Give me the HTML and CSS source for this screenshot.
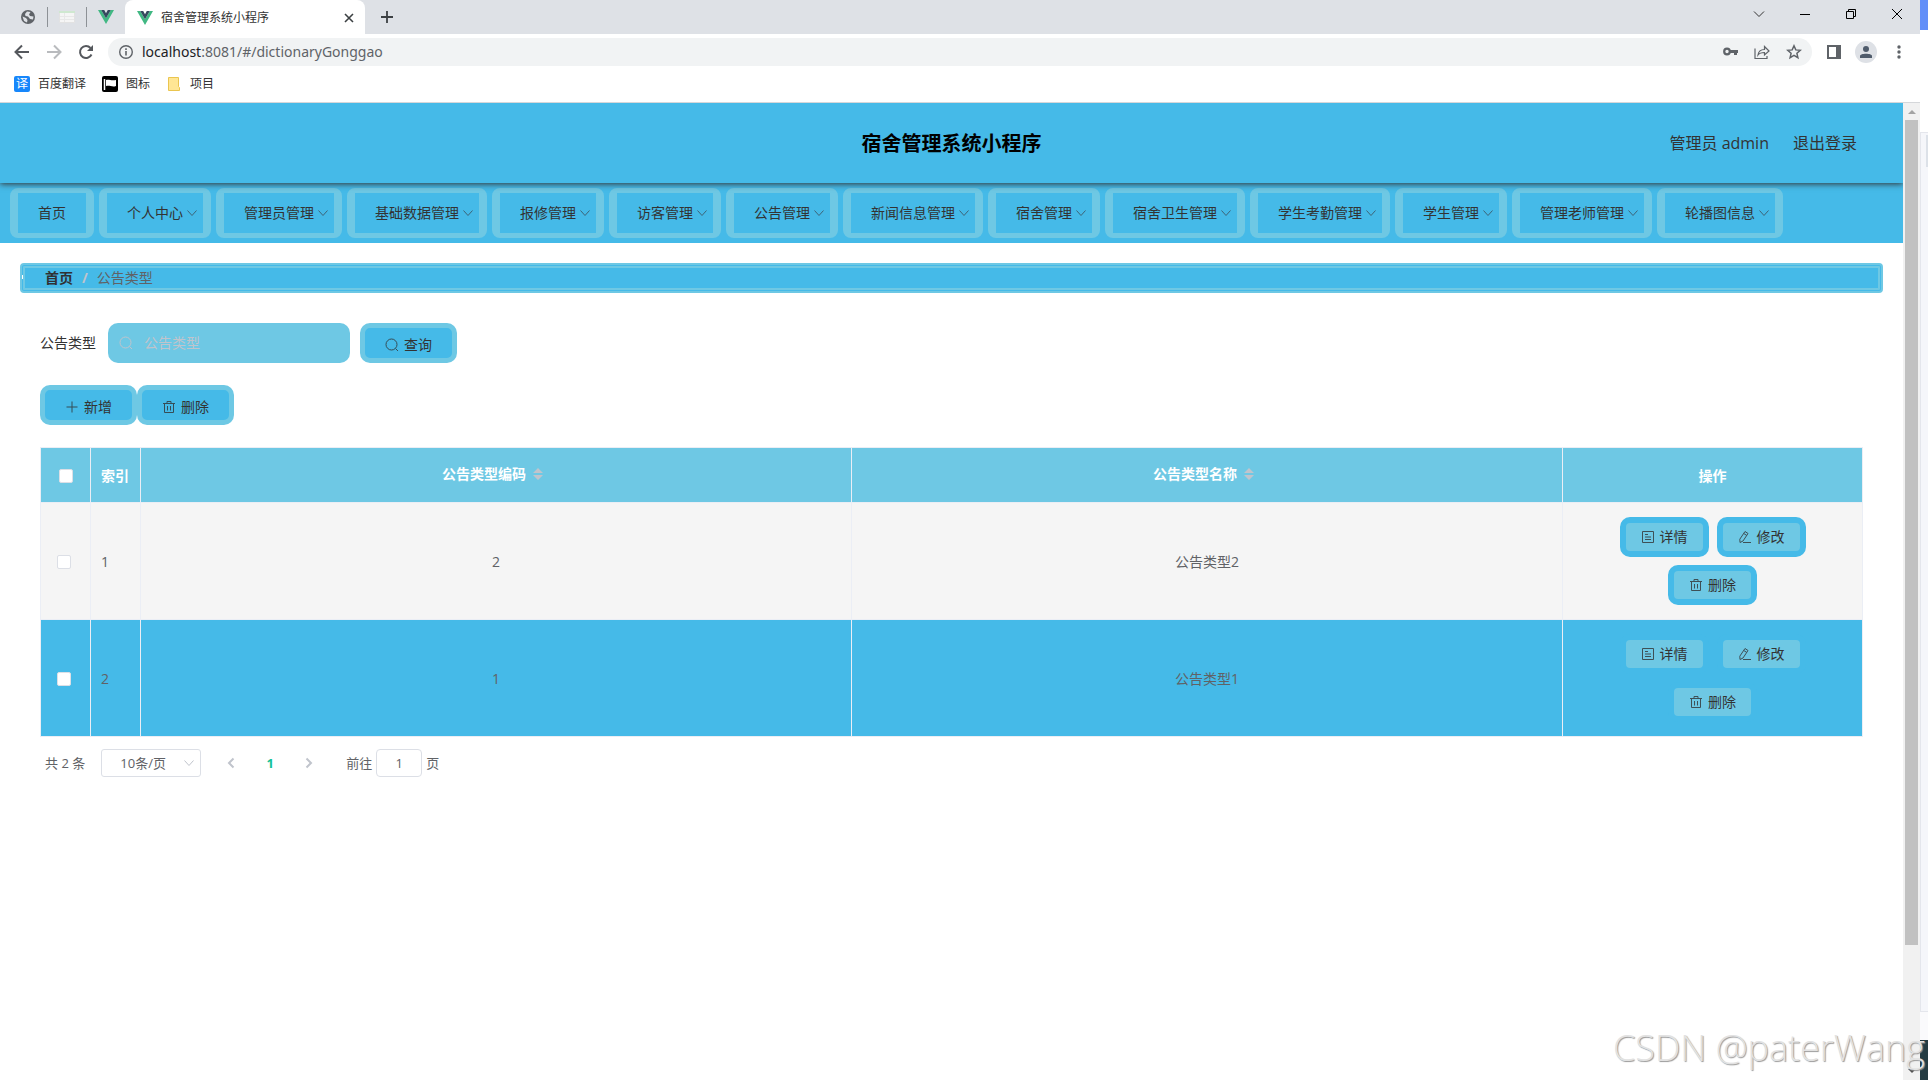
FILE: index.html
```html
<!DOCTYPE html>
<html lang="zh-CN">
<head>
<meta charset="utf-8">
<title>宿舍管理系统小程序</title>
<link rel="stylesheet" href="styles.css">
</head>
<body>
<svg class="defs" width="0" height="0" aria-hidden="true">
  <symbol id="vue" viewBox="0 0 16 14"><path fill="#41b883" d="M0 0h3.200L8 8.200 12.800 0H16L8 14z"/><path fill="#35495e" d="M3.200 0H6.200L8 3.200 9.800 0h3L8 8.200z"/></symbol>
  <symbol id="down" viewBox="0 0 12 12"><path fill="none" stroke="currentColor" d="M1.500 3.500 6 8.500l4.500-5"/></symbol>
  <symbol id="search" viewBox="0 0 14 14"><circle cx="6.500" cy="6.500" r="5.500" fill="none" stroke="currentColor"/><path stroke="currentColor" d="m10.500 10.500 2.500 2.500"/></symbol>
  <symbol id="plus" viewBox="0 0 14 14"><path stroke="currentColor" d="M7 1.500v11M1.500 7h11"/></symbol>
  <symbol id="trash" viewBox="0 0 14 14"><path fill="none" stroke="currentColor" d="M1 3.500h12M2.500 3.500v9h9v-9M5 3.500v-2h4v2M5.500 6v4.500M8.500 6v4.500"/></symbol>
  <symbol id="doc" viewBox="0 0 14 14"><path fill="none" stroke="currentColor" d="M1.500 1.500h11v11h-11zM4 4.500h3M4 7h6M4 9.500h6"/></symbol>
  <symbol id="edit" viewBox="0 0 14 14"><path fill="none" stroke="currentColor" d="M7 1.500 10 3.500 5 11 2 12.500 1.800 9.200zM5.800 3.500l3 2M5 12.500h8"/></symbol>
</svg>
<div class="screen">
  <div class="browser">
    <header class="tabstrip">
      <div class="pinned"><svg width="14" height="14" viewBox="0 0 14 14"><circle cx="7" cy="7" r="7" fill="#5f6368"/><path fill="#dee1e6" d="M6 1.500 9.500 2 8 4.500 9 6l3.500.500-.5 3L9 9 7 6.500 4.500 6 4 4zM1.500 6.500 5 8l1.500 2L6 12.500 3 11z"/></svg></div>
      <div class="pinned"><svg width="16" height="12" viewBox="0 0 16 12"><path fill="#f5f5f5" stroke="#e2e2e2" d="M.5.500h15v11H.5z"/><path fill="#cfe8d0" d="M0 0h16v2H0z"/><path stroke="#e8e8e8" d="M1 5.500h14M1 8.500h14M5.500 2v9"/></svg></div>
      <div class="pinned"><svg width="16" height="14"><use href="#vue"/></svg></div>
      <div class="tab">
        <svg width="16" height="14"><use href="#vue"/></svg>
        <span class="tab-title">宿舍管理系统小程序</span>
        <button class="bare" aria-label="关闭标签页"><svg width="10" height="10" viewBox="0 0 10 10"><path stroke="#3c4043" stroke-width="1.600" d="m1 1 8 8M9 1 1 9"/></svg></button>
      </div>
      <button class="bare newtab" aria-label="新建标签页"><svg width="12" height="12" viewBox="0 0 12 12"><path stroke="#3c4043" stroke-width="1.800" d="M6 0v12M0 6h12"/></svg></button>
      <div class="window-controls">
        <button class="bare" aria-label="搜索标签页"><svg width="12" height="12" viewBox="0 0 12 12"><path fill="none" stroke="#333" d="m1 3.500 5 5 5-5"/></svg></button>
        <button class="bare" aria-label="最小化"><svg width="12" height="12" viewBox="0 0 12 12"><path stroke="#000" d="M1 6.500h10"/></svg></button>
        <button class="bare" aria-label="还原"><svg width="12" height="12" viewBox="0 0 12 12"><path fill="none" stroke="#000" d="M1.500 3.500h7v7h-7zM3.500 3.500v-2h7v7h-2"/></svg></button>
        <button class="bare" aria-label="关闭"><svg width="12" height="12" viewBox="0 0 12 12"><path stroke="#000" d="m1 1 10 10M11 1 1 11"/></svg></button>
      </div>
    </header>
    <div class="toolbar">
      <div class="history">
        <button class="bare" aria-label="后退"><svg width="16" height="16" viewBox="0 0 16 16"><path fill="none" stroke="#55585d" stroke-width="2" d="M15 8H2M8 1.500 1.500 8 8 14.500"/></svg></button>
        <button class="bare" aria-label="前进"><svg width="16" height="16" viewBox="0 0 16 16"><path fill="none" stroke="#b9bbbe" stroke-width="2" d="M1 8h13M8 1.500 14.500 8 8 14.500"/></svg></button>
        <button class="bare" aria-label="刷新"><svg width="16" height="16" viewBox="0 0 16 16"><path fill="none" stroke="#55585d" stroke-width="2" d="M13.500 10.500A6 6 0 1 1 12.500 4"/><path fill="#55585d" d="M15 1v6H9z"/></svg></button>
      </div>
      <div class="address">
        <svg width="14" height="14" viewBox="0 0 14 14"><circle cx="7" cy="7" r="6.300" fill="none" stroke="#5f6368" stroke-width="1.400"/><path stroke="#5f6368" stroke-width="1.600" d="M7 6v4.500M7 3.300v1.600"/></svg>
        <span class="url"><b>localhost</b>:8081/#/dictionaryGonggao</span>
        <button class="bare" aria-label="密码"><svg width="16" height="16" viewBox="0 0 16 16"><circle cx="5" cy="7.500" r="2.800" fill="none" stroke="#5f6368" stroke-width="2.200"/><path fill="#5f6368" d="M7.500 6H16v3h-1v2h-3V9H7.500z"/></svg></button>
        <button class="bare" aria-label="分享"><svg width="16" height="16" viewBox="0 0 16 16"><path fill="none" stroke="#5f6368" stroke-width="1.200" d="M1 4.500v10h12V12M4 11c.5-4 3-5.500 6.500-5.500V2.500L15 7l-4.500 4V8.500C7.500 8.500 5.500 9 4 11z"/></svg></button>
        <button class="bare" aria-label="收藏"><svg width="16" height="16" viewBox="0 0 16 16"><path fill="none" stroke="#5f6368" stroke-width="1.500" d="m8 1.800 1.800 4.100 4.500.4-3.400 3 1 4.400L8 11.400l-3.900 2.300 1-4.400-3.400-3 4.500-.4z"/></svg></button>
      </div>
      <div class="tools">
        <button class="bare" aria-label="侧边栏"><svg width="14" height="14" viewBox="0 0 14 14"><path fill="#5f6368" d="M0 0h14v14H0z"/><path fill="#fff" d="M2 2h7v10H2z"/></svg></button>
        <button class="bare avatar" aria-label="用户"><svg width="14" height="14" viewBox="0 0 14 14"><circle cx="7" cy="4" r="3" fill="#4f5b6b"/><path fill="#4f5b6b" d="M1 13v-2c0-3 12-3 12 0v2z"/></svg></button>
        <button class="bare" aria-label="菜单"><svg width="4" height="14" viewBox="0 0 4 14"><g fill="#5f6368"><circle cx="2" cy="2" r="1.700"/><circle cx="2" cy="7" r="1.700"/><circle cx="2" cy="12" r="1.700"/></g></svg></button>
      </div>
    </div>
    <nav class="bookmarks">
      <a href="#"><span class="translate">译</span>百度翻译</a>
      <a href="#"><svg width="16" height="16" viewBox="0 0 16 16"><rect width="16" height="16" rx="2"/><path fill="none" stroke="#fff" stroke-width="1.500" d="M2.500 14V3"/><path fill="#fff" d="M4 4c3-1 5 1 10 0v6c-4 1.500-6-1-10 0z"/></svg>图标</a>
      <a href="#"><svg width="16" height="16" viewBox="0 0 16 16"><path fill="#ffe694" stroke="#eac54f" d="M2.500 1.500h10v9l1 1v3h-11z"/></svg>项目</a>
    </nav>
    <div class="viewport">
      <div class="page">
        <header class="app-header">
          <h1>宿舍管理系统小程序</h1>
          <div class="account"><span>管理员 admin</span><a href="#">退出登录</a></div>
        </header>
        <nav class="menu">
          <a href="#">首页</a>
          <a href="#">个人中心<svg><use href="#down"/></svg></a>
          <a href="#">管理员管理<svg><use href="#down"/></svg></a>
          <a href="#">基础数据管理<svg><use href="#down"/></svg></a>
          <a href="#">报修管理<svg><use href="#down"/></svg></a>
          <a href="#">访客管理<svg><use href="#down"/></svg></a>
          <a href="#">公告管理<svg><use href="#down"/></svg></a>
          <a href="#">新闻信息管理<svg><use href="#down"/></svg></a>
          <a href="#">宿舍管理<svg><use href="#down"/></svg></a>
          <a href="#">宿舍卫生管理<svg><use href="#down"/></svg></a>
          <a href="#">学生考勤管理<svg><use href="#down"/></svg></a>
          <a href="#">学生管理<svg><use href="#down"/></svg></a>
          <a href="#">管理老师管理<svg><use href="#down"/></svg></a>
          <a href="#">轮播图信息<svg><use href="#down"/></svg></a>
        </nav>
        <main>
          <div class="breadcrumb"><a href="#">首页</a><b>/</b><span>公告类型</span></div>
          <div class="content">
            <form class="filter">
              <label for="type">公告类型</label>
              <div class="search-box"><svg class="icon"><use href="#search"/></svg><input id="type" type="text" placeholder="公告类型"></div>
              <button type="button" class="btn"><svg class="icon"><use href="#search"/></svg>查询</button>
            </form>
            <div class="actions">
              <button type="button" class="btn"><svg class="icon"><use href="#plus"/></svg>新增</button>
              <button type="button" class="btn"><svg class="icon"><use href="#trash"/></svg>删除</button>
            </div>
            <table>
              <colgroup><col class="narrow"><col class="narrow"><col><col><col class="ops-col"></colgroup>
              <thead>
                <tr>
                  <th><input type="checkbox" aria-label="全选"></th>
                  <th class="index">索引</th>
                  <th><span class="sortable">公告类型编码<svg width="10" height="14" viewBox="0 0 10 14"><path fill="#c0c4cc" d="M0 6l5-5 5 5zM0 8l5 5 5-5z"/></svg></span></th>
                  <th><span class="sortable">公告类型名称<svg width="10" height="14" viewBox="0 0 10 14"><path fill="#c0c4cc" d="M0 6l5-5 5 5zM0 8l5 5 5-5z"/></svg></span></th>
                  <th>操作</th>
                </tr>
              </thead>
              <tbody>
                <tr>
                  <td class="pick"><input type="checkbox" aria-label="选择第1行"></td>
                  <td class="index">1</td><td>2</td><td>公告类型2</td>
                  <td class="ops-cell"><div class="ops">
                    <button type="button" class="btn row-btn"><svg class="icon"><use href="#doc"/></svg>详情</button>
                    <button type="button" class="btn row-btn"><svg class="icon"><use href="#edit"/></svg>修改</button>
                    <button type="button" class="btn row-btn"><svg class="icon"><use href="#trash"/></svg>删除</button>
                  </div></td>
                </tr>
                <tr>
                  <td class="pick"><input type="checkbox" aria-label="选择第2行"></td>
                  <td class="index">2</td><td>1</td><td>公告类型1</td>
                  <td class="ops-cell"><div class="ops">
                    <button type="button" class="btn row-btn"><svg class="icon"><use href="#doc"/></svg>详情</button>
                    <button type="button" class="btn row-btn"><svg class="icon"><use href="#edit"/></svg>修改</button>
                    <button type="button" class="btn row-btn"><svg class="icon"><use href="#trash"/></svg>删除</button>
                  </div></td>
                </tr>
              </tbody>
            </table>
            <div class="pagination">
              <span>共 2 条</span>
              <div class="size"><select aria-label="每页条数"><option>10条/页</option></select><svg width="12" height="12"><use href="#down"/></svg></div>
              <div class="pager">
                <button class="bare" aria-label="上一页"><svg width="8" height="12" viewBox="0 0 8 12"><path fill="none" stroke="#c0c4cc" stroke-width="2" d="M6.500 1.500 2 6l4.500 4.500"/></svg></button>
                <button class="bare current">1</button>
                <button class="bare" aria-label="下一页"><svg width="8" height="12" viewBox="0 0 8 12"><path fill="none" stroke="#c0c4cc" stroke-width="2" d="M1.500 1.500 6 6l-4.500 4.500"/></svg></button>
              </div>
              <label class="jump">前往<input type="text" value="1">页</label>
            </div>
          </div>
        </main>
      </div>
      <div class="scrollbar" aria-hidden="true"><i class="up"></i><div class="track"><div class="thumb"></div></div><i class="dn"></i></div>
    </div>
  </div>
  <div class="behind" aria-hidden="true"><div class="b-blue"></div><div class="b-white"></div><div class="b-panel"></div><div class="b-foot"></div><div class="b-dark"></div></div>
  <div class="watermark">CSDN @paterWang</div>
</div>
</body>
</html>
```
FILE: styles.css
```css
:root {
  --blue: #45bae8;
  --light: #6ec8e4;
  --line: #ebeef5;
  --ink: #333;
}
* { box-sizing: border-box; }
body {
  margin: 0;
  font: 14px/20px "Open Sans", "Noto Sans CJK SC", sans-serif;
  color: var(--ink);
  background: #fff;
}
a { color: inherit; text-decoration: none; }
button, input, select { font: inherit; color: inherit; }
svg { flex: none; }
.defs { position: absolute; }
.screen { position: relative; display: flex; height: 100vh; overflow: hidden; }
.browser { flex: 1; min-width: 0; display: flex; flex-direction: column; }
.bare { display: flex; align-items: center; justify-content: center; padding: 0; border: 0; background: none; }

/* Browser frame */
.tabstrip { display: flex; align-items: center; height: 34px; padding-left: 8px; background: #dee1e6; }
.pinned { display: flex; justify-content: center; align-items: center; width: 39px; height: 20px; }
.pinned + .pinned { border-left: 1px solid #8d9196; }
.tab {
  display: flex; align-items: center; gap: 8px;
  width: 240px; height: 34px; padding: 2px 11px 0 12px;
  background: #fff; border-radius: 8px 8px 0 0;
  font-size: 12px;
}
.tab-title { flex: 1; }
.newtab { margin-left: 16px; }
.window-controls { display: flex; gap: 34px; margin-left: auto; padding: 0 17px 6px 0; }
.toolbar { display: flex; align-items: center; height: 36px; }
.history { display: flex; gap: 16px; padding: 0 14px; }
.address {
  display: flex; flex: 1; align-items: center; gap: 16px;
  height: 28px; padding: 0 10px 0 11px;
  border-radius: 14px; background: #f1f3f4;
}
.url { flex: 1; margin-left: -7px; font-family: "Noto Sans", sans-serif; color: #5f6368; }
.url b { font-weight: 400; color: #202124; }
.tools { display: flex; align-items: center; gap: 14px; padding: 0 19px 0 15px; }
.avatar { width: 22px; height: 22px; border-radius: 50%; background: #dee1e6; }
.tools button:last-child { margin-left: 6px; }
.bookmarks { display: flex; align-items: center; gap: 16px; height: 33px; padding: 0 14px 4px; border-bottom: 1px solid #d5d7da; font-size: 12px; }
.bookmarks a { display: flex; align-items: center; gap: 8px; }
.translate { width: 16px; border-radius: 2px; background: #1787fb; color: #fff; font-size: 12px; line-height: 16px; text-align: center; }

/* Viewport and scrollbar */
.viewport { display: flex; flex: 1; min-height: 0; overflow: hidden; }
.page { flex: 1; min-width: 0; overflow: hidden; }
.scrollbar { display: flex; flex-direction: column; width: 17px; padding: 7px 2px; background: #f1f1f1; }
.scrollbar i { align-self: center; border: solid transparent; }
.scrollbar .up { margin-bottom: 6px; border-width: 0 4px 4px; border-bottom-color: #a3a3a3; }
.scrollbar .dn { margin-top: 6px; border-width: 4px 4px 0; border-top-color: #505050; }
.track { flex: 1; }
.thumb { height: 87.5%; background: #c1c1c1; }

/* Application header */
.app-header {
  position: relative;
  display: grid; grid-template-columns: 1fr auto 1fr; align-items: center;
  height: 80px; background: var(--blue);
  box-shadow: 0 1px 6px #333;
}
.app-header h1 { grid-column: 2; margin: 0; padding-top: 2px; font-size: 20px; line-height: 28px; color: #000; }
.account { display: flex; justify-content: flex-end; gap: 24px; padding-right: 46px; font-size: 16px; }
.menu { display: flex; gap: 5px; height: 60px; padding: 5px 10px; background: var(--blue); overflow: hidden; }
.menu a {
  display: flex; align-items: center; gap: 3px; flex: none;
  height: 50px; padding: 0 20px;
  border: solid var(--light); border-width: 5px 8px; border-radius: 8px;
}
.menu a:has(svg) { padding-right: 5px; }
.menu svg { width: 12px; height: 12px; color: #3d6478; }

/* Page body */
main { padding: 20px; }
.breadcrumb {
  position: relative;
  display: flex; align-items: center; gap: 9px; height: 30px; padding-left: 20px;
  border: 5px double var(--light); border-radius: 4px; background: var(--blue); color: #606266;
}
.breadcrumb::before { content: ""; position: absolute; left: -3px; top: 7px; width: 1px; height: 4px; background: #fff; }
.breadcrumb a { font-weight: 700; color: #303133; }
.breadcrumb b { color: #c0c4cc; }
.content { padding: 30px 20px; }
.filter { display: flex; align-items: center; gap: 10px; margin-bottom: 22px; }
.search-box { display: flex; align-items: center; gap: 11px; width: 242px; height: 40px; margin-left: 2px; padding-left: 11px; border-radius: 10px; background: var(--light); color: #c0c4cc; }
.search-box input { flex: 1; min-width: 0; padding: 0; border: 0; outline: 0; background: none; }
.search-box input::placeholder { color: #c0c4cc; }
.icon { width: 14px; height: 14px; opacity: .8; }
.search-box .icon { opacity: 1; }
.btn {
  display: flex; align-items: center; gap: 5px; height: 40px; padding: 3px 20px 0;
  border: 5px solid var(--light); border-radius: 10px; background: var(--blue); color: var(--ink);
}
.actions { display: flex; margin-bottom: 22px; }
table { width: 100%; table-layout: fixed; border-collapse: separate; border-spacing: 0; border: solid var(--line); border-width: 1px 0 0 1px; text-align: center; color: #606266; }
.narrow { width: 50px; }
.ops-col { width: 300px; }
th, td { padding: 1px 0 0; border: solid var(--line); border-width: 0 1px 1px 0; }
th { height: 55px; background: var(--light); color: #fff; }
td { height: 117px; }
tbody tr { background: #f5f5f5; }
tbody tr:nth-child(2) { background: var(--blue); }
.index { padding-left: 10px; text-align: left; }
.sortable { display: inline-flex; align-items: center; gap: 7px; padding: 0 7px 4px 0; vertical-align: middle; }
input[type="checkbox"] { appearance: none; display: block; width: 14px; height: 14px; margin: 0 auto; border: 1px solid #dcdfe6; border-radius: 2px; background: #fff; }
.pick { padding-right: 4px; }
.ops-cell { padding: 0; }
.ops { display: flex; flex-wrap: wrap; justify-content: center; gap: 8px; padding: 0 50px; }
.row-btn { padding: 0 15px; border: 6px solid var(--blue); background: var(--light); }
.pagination { display: flex; align-items: center; padding: 12px 5px; font-size: 13px; color: #606266; }
.size { position: relative; width: 100px; height: 28px; margin-left: 16px; }
.size select { appearance: none; width: 100%; height: 28px; padding: 0 34px 0 18px; border: 1px solid #dcdfe6; border-radius: 3px; background: #fff; text-align: center; }
.size svg { position: absolute; right: 6px; top: 8px; color: #c0c4cc; }
.pager { display: flex; gap: 9px; margin: 0 22px 0 15px; }
.pager button { width: 30px; height: 28px; }
.current { font-weight: 700; color: #13c298; }
.jump { display: flex; align-items: center; gap: 4px; }
.jump input { width: 46px; height: 28px; border: 1px solid #dcdfe6; border-radius: 4px; text-align: center; }

/* Window visible behind the browser */
.behind { display: flex; flex-direction: column; width: 8px; }
.b-blue { height: 30px; background: #628ff8; }
.b-white { height: 102px; }
.b-panel { flex: 1; border: solid #e4e6ec; border-width: 1px 0 1px 1px; background: linear-gradient(#dce1e8, #dce1e8) right 2px / 2px 32px no-repeat #f5f6fa; }
.b-foot { height: 28px; background: #fafafc; }
.b-dark { height: 40px; background: #243b42; }
.watermark {
  position: absolute; right: 3px; bottom: 8px;
  font: 300 36px/48px "Open Sans", sans-serif;
  color: #e2e2e2; text-shadow: 1px 1px 1px #999;
}
```
